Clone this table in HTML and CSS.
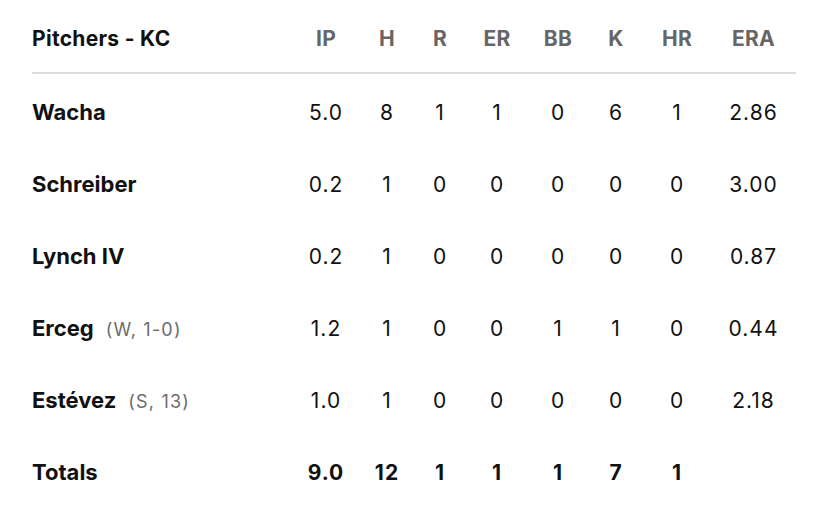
FILE: index.html
```html
<!DOCTYPE html>
<html>
<head>
<meta charset="utf-8">
<link rel="stylesheet" href="styles.css">
</head>
<body>
<div class="box">
  <div class="row head">
    <div class="name">Pitchers - KC</div>
    <div>IP</div><div>H</div><div>R</div><div>ER</div><div>BB</div><div>K</div><div>HR</div><div>ERA</div>
  </div>
  <div class="row">
    <div class="name">Wacha</div>
    <div>5.0</div><div>8</div><div>1</div><div>1</div><div>0</div><div>6</div><div>1</div><div>2.86</div>
  </div>
  <div class="row">
    <div class="name">Schreiber</div>
    <div>0.2</div><div>1</div><div>0</div><div>0</div><div>0</div><div>0</div><div>0</div><div>3.00</div>
  </div>
  <div class="row">
    <div class="name">Lynch IV</div>
    <div>0.2</div><div>1</div><div>0</div><div>0</div><div>0</div><div>0</div><div>0</div><div>0.87</div>
  </div>
  <div class="row">
    <div class="name">Erceg<span class="note">(W, 1-0)</span></div>
    <div>1.2</div><div>1</div><div>0</div><div>0</div><div>1</div><div>1</div><div>0</div><div>0.44</div>
  </div>
  <div class="row">
    <div class="name">Estévez<span class="note">(S, 13)</span></div>
    <div>1.0</div><div>1</div><div>0</div><div>0</div><div>0</div><div>0</div><div>0</div><div>2.18</div>
  </div>
  <div class="row total">
    <div class="name">Totals</div>
    <div>9.0</div><div>12</div><div>1</div><div>1</div><div>1</div><div>7</div><div>1</div><div></div>
  </div>
</div>
</body>
</html>
```
FILE: styles.css
```css
html, body {
  margin: 0;
  padding: 0;
  background: #ffffff;
}
body {
  font-family: Inter, "Open Sans", sans-serif;
  color: #111111;
}
.box {
  padding: 0 32px;
}
.row {
  display: grid;
  grid-template-columns: 1fr 70px 52px 54px 60px 62px 54px 68px 85px;
  align-items: center;
  box-sizing: border-box;
  height: 72px;
  padding-top: 4px;
  font-size: 21px;
  letter-spacing: 1px;
  text-align: center;
}
.row .name {
  text-align: left;
  font-weight: 700;
  font-size: 22px;
  letter-spacing: 0;
  white-space: nowrap;
}
.head {
  height: 74px;
  padding-top: 5px;
  border-bottom: 2px solid #dcdcdc;
  color: #666666;
  font-weight: 700;
  font-size: 21px;
  letter-spacing: 0.3px;
}
.head .name {
  color: #111111;
  font-size: 21px;
  letter-spacing: 0.3px;
}
.note {
  font-weight: 400;
  font-size: 18px;
  letter-spacing: 1.2px;
  color: #6b6b6b;
  margin-left: 12px;
}
.total {
  font-weight: 700;
}
```
